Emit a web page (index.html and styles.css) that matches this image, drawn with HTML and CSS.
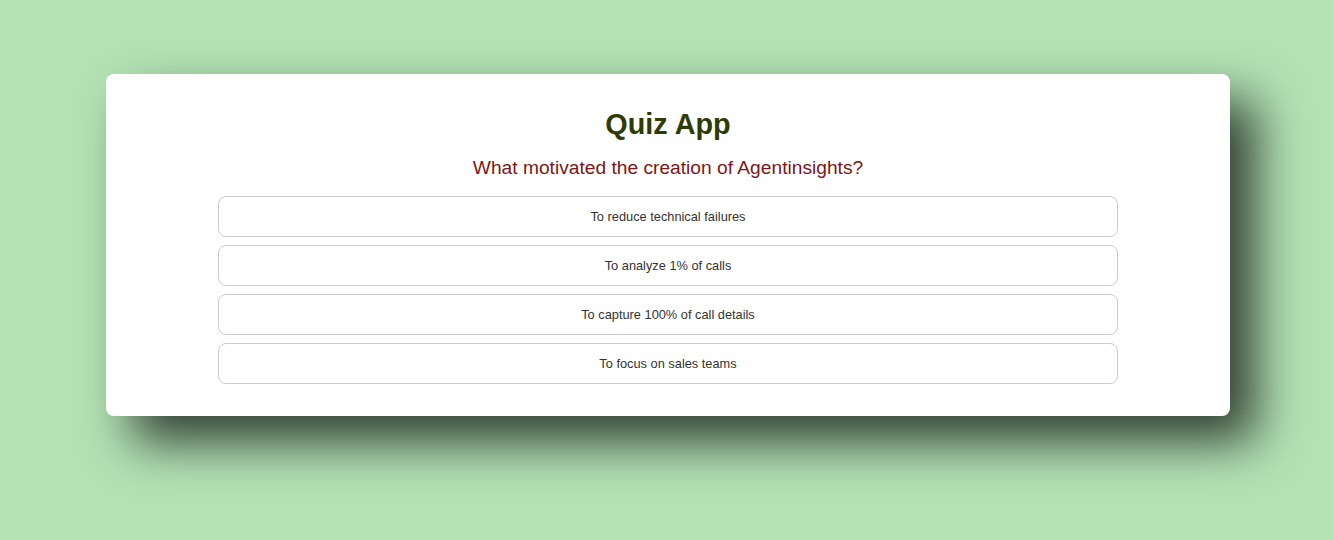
FILE: index.html
```html
<!DOCTYPE html>
<html>
<head>
<meta charset="utf-8">
<link rel="stylesheet" href="styles.css">
</head>
<body>
<div class="card">
  <h1 class="title">Quiz App</h1>
  <p class="question">What motivated the creation of Agentinsights?</p>
  <div class="options">
    <button class="option">To reduce technical failures</button>
    <button class="option">To analyze 1% of calls</button>
    <button class="option">To capture 100% of call details</button>
    <button class="option">To focus on sales teams</button>
  </div>
</div>
</body>
</html>
```
FILE: styles.css
```css
html, body {
  margin: 0;
  padding: 0;
  background: #b3e3b5;
  font-family: "Liberation Sans", Arial, sans-serif;
}
body {
  height: 540px;
  overflow: hidden;
}
.card {
  width: 1124px;
  box-sizing: border-box;
  margin: 74px 0 0 106px;
  background: #fff;
  border-radius: 8px;
  padding: 34px 112px 32px;
  box-shadow: 26px 26px 50px rgba(0, 0, 0, 0.72);
  display: flex;
  flex-direction: column;
  align-items: center;
}
.title {
  margin: 0;
  font-size: 28.8px;
  font-weight: bold;
  color: #2f3b04;
  line-height: 33px;
}
.question {
  margin: 16px 0 0;
  font-size: 19.2px;
  color: #7d1616;
  line-height: 22px;
}
.options {
  margin-top: 17px;
  width: 900px;
  display: flex;
  flex-direction: column;
  gap: 8px;
}
.option {
  height: 41px;
  background: #fff;
  border: 1px solid #ccc;
  border-radius: 8px;
  font-family: "Liberation Sans", Arial, sans-serif;
  font-size: 12.8px;
  color: #333;
  cursor: pointer;
}
```
